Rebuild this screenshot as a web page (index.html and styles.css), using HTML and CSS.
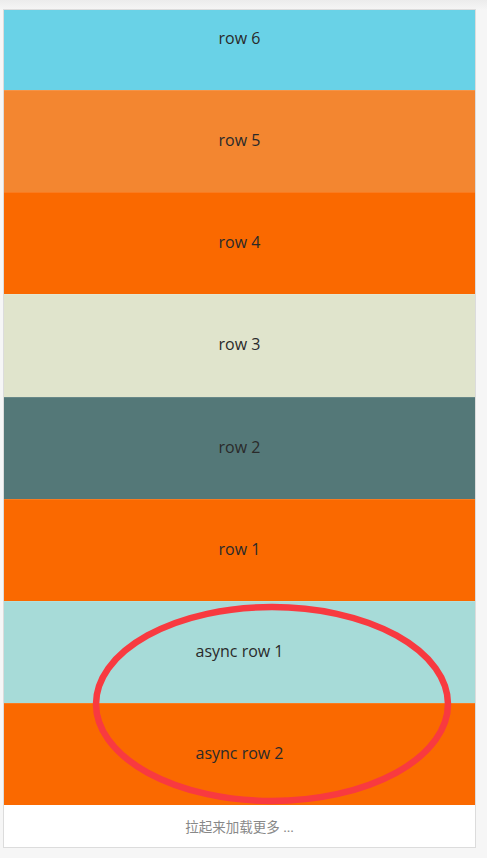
FILE: index.html
```html
<!DOCTYPE html>
<html>
<head>
<meta charset="utf-8">
<link rel="stylesheet" href="styles.css">
</head>
<body>
<div class="frame">
  <div class="viewport">
    <div class="list">
      <div class="row c-cyan">row 6</div>
      <div class="row c-orange-light">row 5</div>
      <div class="row c-orange">row 4</div>
      <div class="row c-beige">row 3</div>
      <div class="row c-slate">row 2</div>
      <div class="row c-orange">row 1</div>
      <div class="row c-mint">async row 1</div>
      <div class="row c-orange">async row 2</div>
    </div>
  </div>
  <div class="footer">拉起来加载更多 ...</div>
  <svg class="mark" width="362" height="204" viewBox="0 0 362 204">
    <ellipse cx="181" cy="102" rx="176" ry="97" fill="none" stroke="#f83a40" stroke-width="6.5"/>
  </svg>
</div>
</body>
</html>
```

FILE: styles.css
```css
html, body {
  margin: 0;
  padding: 0;
}
body {
  background: linear-gradient(#ececec 0, #f6f6f6 10px, #f6f6f6 100%);
  height: 858px;
  font-family: "Open Sans", "Noto Sans", "Noto Sans CJK SC", sans-serif;
}
.frame {
  position: relative;
  margin: 9px 0 0 3px;
  width: 471px;
  border: 1px solid #dcdcdc;
  background: #fff;
}
.viewport {
  height: 795px;
  overflow: hidden;
}
.list {
  margin-top: -22px;
}
.row {
  height: 102.14px;
  display: flex;
  align-items: center;
  justify-content: center;
  padding-bottom: 3px;
  font-size: 16px;
  color: #2a2a2a;
  box-sizing: border-box;
  border-top: 1px solid rgba(255, 255, 255, 0.12);
}
.c-cyan { background: #69d2e7; }
.c-orange-light { background: #f38630; }
.c-orange { background: #fa6900; }
.c-beige { background: #e0e4cc; }
.c-slate { background: #547878; }
.c-mint { background: #a7dbd8; }
.footer {
  height: 42px;
  display: flex;
  align-items: center;
  justify-content: center;
  font-size: 13.5px;
  color: #888;
}
.mark {
  position: absolute;
  left: 87px;
  top: 592px;
}
```
